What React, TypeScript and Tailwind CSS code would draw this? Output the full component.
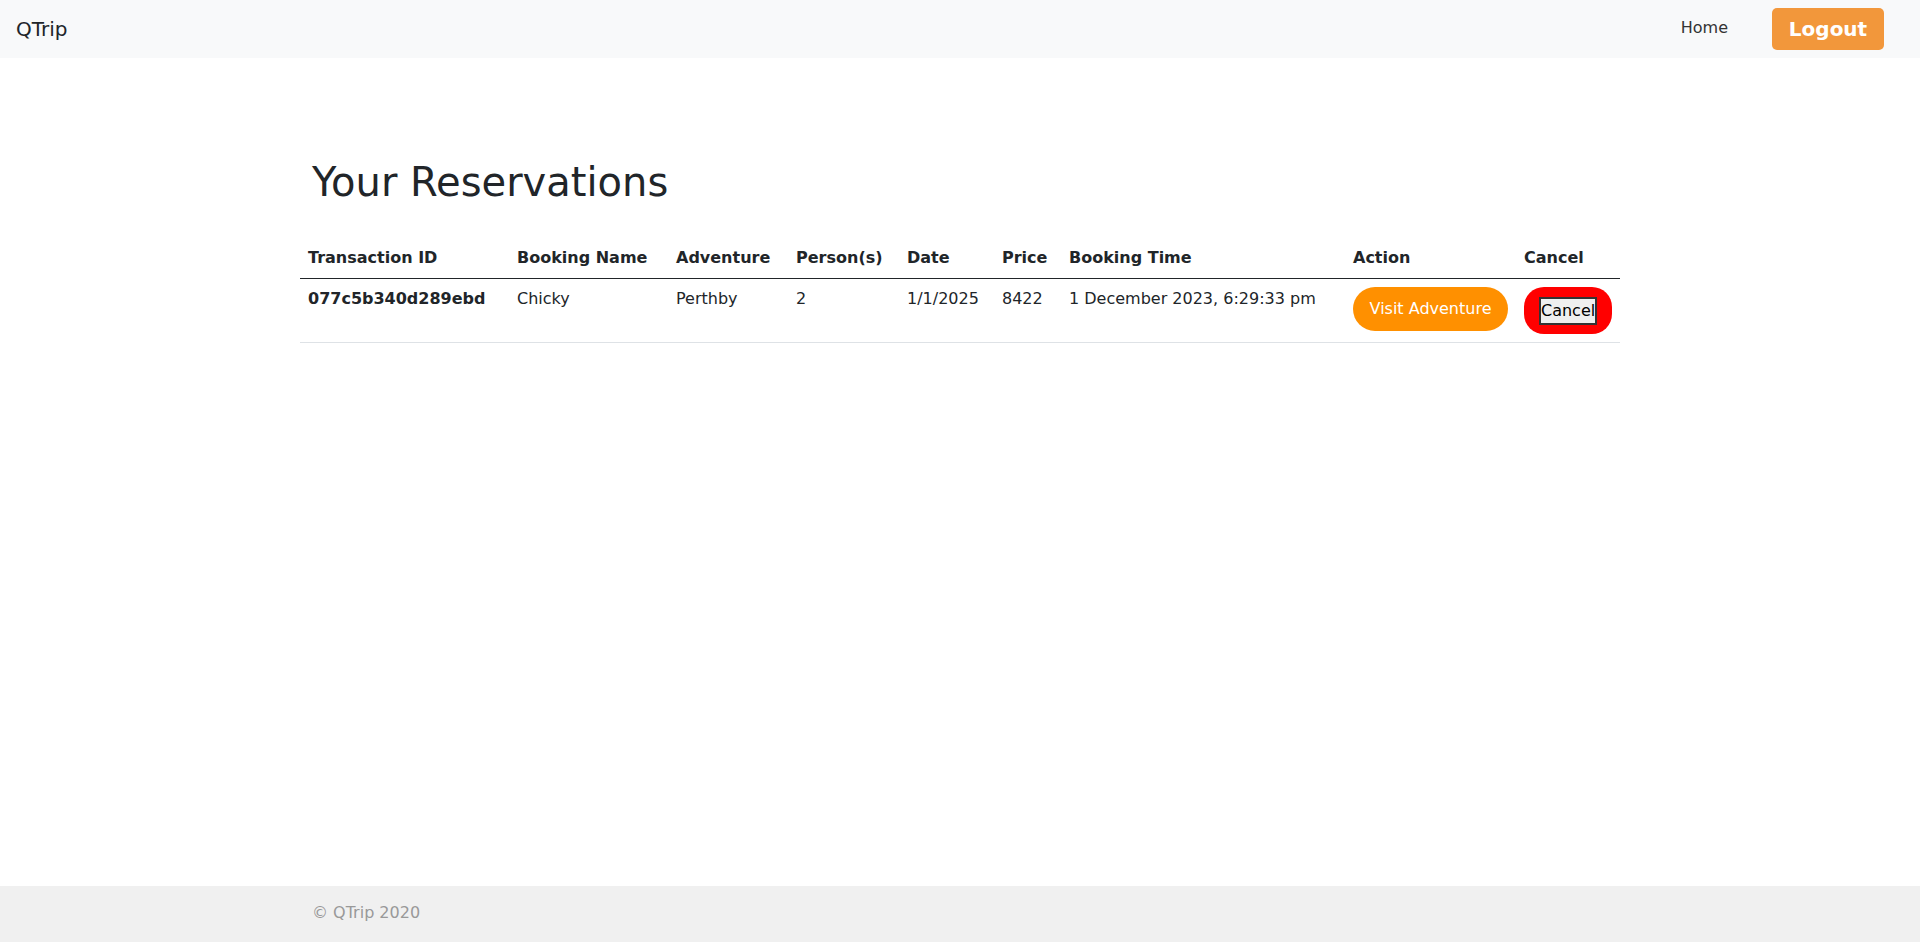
import React from 'react';

const font = { fontFamily: '"DejaVu Sans", sans-serif' };

type Reservation = {
  id: string;
  name: string;
  adventure: string;
  person: number;
  date: string;
  price: number;
  time: string;
};

const reservations: Reservation[] = [
  {
    id: '077c5b340d289ebd',
    name: 'Chicky',
    adventure: 'Perthby',
    person: 2,
    date: '1/1/2025',
    price: 8422,
    time: '1 December 2023, 6:29:33 pm',
  },
];

function Navbar() {
  return (
    <nav className="h-[58px] bg-[#f8f9fa] flex items-center justify-between pl-4 pr-9">
      <span className="text-[20px] text-[#212529] leading-[30px]">QTrip</span>
      <div className="flex items-center">
        <a href="#" className="text-[16px] text-[#333] mr-11 -mt-[2px]">
          Home
        </a>
        <button className="w-[112px] h-[42px] rounded-[5px] bg-[#f2973b] text-white font-bold text-[20px]">
          Logout
        </button>
      </div>
    </nav>
  );
}

function ReservationTable() {
  const headers = [
    ['Transaction ID', 'w-[209px]'],
    ['Booking Name', 'w-[159px]'],
    ['Adventure', 'w-[120px]'],
    ['Person(s)', 'w-[111px]'],
    ['Date', 'w-[95px]'],
    ['Price', 'w-[67px]'],
    ['Booking Time', 'w-[284px]'],
    ['Action', 'w-[171px]'],
    ['Cancel', 'w-[104px]'],
  ];

  return (
    <table className="w-[1320px] table-fixed border-collapse text-[16px] text-[#212529] align-top">
      <thead>
        <tr className="border-b border-[#212529]">
          {headers.map(([label, w]) => (
            <th key={label} className={`${w} text-left font-bold px-2 py-2 leading-6`}>
              {label}
            </th>
          ))}
        </tr>
      </thead>
      <tbody>
        {reservations.map((r) => (
          <tr key={r.id} className="border-b border-[#dee2e6]">
            <td className="px-2 py-2 leading-6 font-bold align-top">{r.id}</td>
            <td className="px-2 py-2 leading-6 align-top">{r.name}</td>
            <td className="px-2 py-2 leading-6 align-top">{r.adventure}</td>
            <td className="px-2 py-2 leading-6 align-top">{r.person}</td>
            <td className="px-2 py-2 leading-6 align-top">{r.date}</td>
            <td className="px-2 py-2 leading-6 align-top">{r.price}</td>
            <td className="px-2 py-2 leading-6 align-top">{r.time}</td>
            <td className="px-2 py-2 leading-6 align-top">
              <a
                href="#"
                className="inline-flex items-center justify-center w-[155px] h-[44px] rounded-full bg-[#ff9000] text-white"
              >
                Visit Adventure
              </a>
            </td>
            <td className="px-2 py-2 leading-6 align-top">
              <div className="w-[88px] h-[47px] rounded-[20px] bg-[#ff0000] flex items-center justify-center">
                <button className="w-[58px] h-[28px] bg-[#efefef] border-2 border-[#333] text-black text-[16px] leading-[22px] px-0">
                  Cancel
                </button>
              </div>
            </td>
          </tr>
        ))}
      </tbody>
    </table>
  );
}

export default function App() {
  return (
    <div className="min-h-[942px] flex flex-col bg-white" style={font}>
      <Navbar />
      <main className="flex-1">
        <div className="w-[1320px] mx-auto pt-[100px]">
          <h1 className="px-3 text-[40px] leading-[48px] text-[#212529] mb-[32px]">Your Reservations</h1>
          <ReservationTable />
        </div>
      </main>
      <footer className="h-[56px] bg-[#f0f0f0] flex items-center">
        <div className="w-[1320px] mx-auto px-3 text-[16px] text-[#999] pb-[2px]">© QTrip 2020</div>
      </footer>
    </div>
  );
}
